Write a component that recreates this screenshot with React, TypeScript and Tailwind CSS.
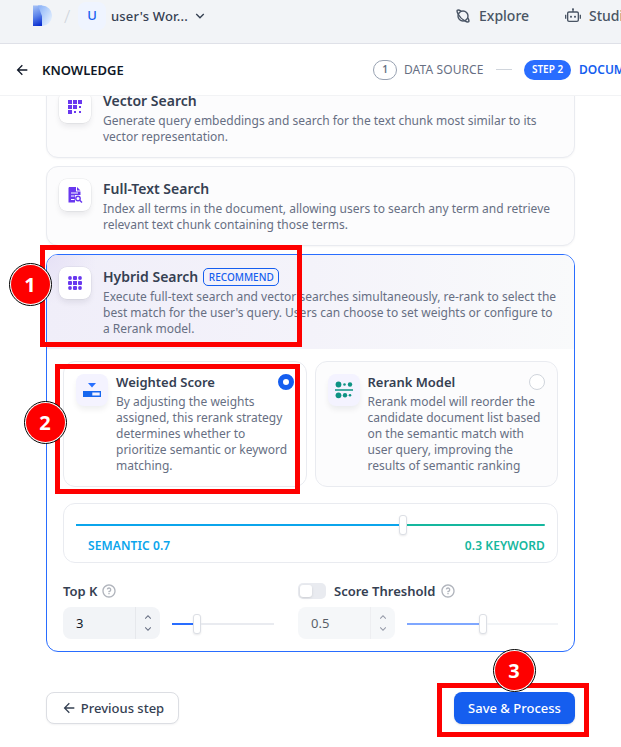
import React from 'react';
import {
  RiArrowDownSLine,
  RiArrowLeftLine,
  RiArrowUpSLine,
  RiQuestionLine,
  RiRobot2Line,
} from 'react-icons/ri';

function Logo() {
  return (
    <svg width="19" height="22" viewBox="0 0 19 22" className="shrink-0">
      <defs>
        <linearGradient id="lg-left" x1="0.4" y1="0" x2="0.6" y2="1">
          <stop offset="0" stopColor="#9fbcf5" />
          <stop offset="0.5" stopColor="#5a82ea" />
          <stop offset="1" stopColor="#0a2fd0" />
        </linearGradient>
        <linearGradient id="lg-right" x1="0" y1="0" x2="1" y2="0.9">
          <stop offset="0" stopColor="#86aef8" />
          <stop offset="0.5" stopColor="#b9d3fb" />
          <stop offset="1" stopColor="#eef6ff" />
        </linearGradient>
      </defs>
      <path d="M0 0.5H9V21H0Z" fill="url(#lg-left)" />
      <path d="M5 0.500H9A10 10.200 0 0 1 9 21V11Z" fill="url(#lg-right)" />
    </svg>
  );
}

function PlanetIcon() {
  return (
    <svg width="16" height="16" viewBox="0 0 16 16" fill="none" stroke="currentColor" strokeWidth="1.400" className="ml-[247px] shrink-0">
      <circle cx="8" cy="8" r="5" />
      <path d="M3.200 6.200C1.900 4 1.800 2.900 2.300 2.300C2.900 1.800 4.200 2 6.200 3.200" />
      <path d="M3.200 6.200C4.300 8.300 7.700 11.700 9.800 12.800C12 14.200 13.100 14.200 13.700 13.700C14.200 13.100 14 11.800 12.800 9.800" />
    </svg>
  );
}

function VectorIcon() {
  return (
    <svg width="14" height="14" viewBox="0 0 14 14" fill="#6938ef">
      <path d="M0 0h4v4H0zM5 0h4v4H5zM10 0h4v4h-4zM0 5h4v4H0zM5 5h4v4H5zM11 6h2v2h-2zM0 10h4v4H0zM6 11h2v2H6zM11 11h2v2h-2z" />
    </svg>
  );
}

function FullTextIcon() {
  return (
    <svg width="15" height="16" viewBox="0 0 15 16" fill="none">
      <path d="M1 0H8V4.500H12.500V8H1Z" fill="#6938ef" />
      <path d="M9 0L12.500 3.500H9Z" fill="#6938ef" />
      <path d="M0.500 0.500H2V15.500H0.500ZM1 8H7V15.500H1Z" fill="#6938ef" />
      <path d="M3 6H10M3 9H6.500M3 12.500H6.500" stroke="#fff" strokeWidth="1.200" />
      <circle cx="10" cy="11.500" r="2.200" stroke="#6938ef" strokeWidth="1.400" />
      <path d="M11.700 13.200L14 15.500" stroke="#6938ef" strokeWidth="1.500" />
    </svg>
  );
}

function HybridIcon() {
  return (
    <svg width="14" height="14" viewBox="0 0 14 14" fill="#6938ef">
      {[2, 7, 12].map((y) =>
        [2, 7, 12].map((x) =>
          x === 7 || y === 7 ? (
            <rect key={`${x}-${y}`} x={x - 2} y={y - 2} width="4" height="4" rx={x === 7 && y === 7 ? 0 : 1} />
          ) : (
            <circle key={`${x}-${y}`} cx={x} cy={y} r="1.900" />
          ),
        ),
      )}
    </svg>
  );
}

function WeightIcon() {
  return (
    <svg width="18" height="14" viewBox="0 0 18 14" fill="#1667ef">
      <path d="M5 0H13L9 4.500Z" fill="#2970ff" />
      <path fillRule="evenodd" d="M0 8H18V14H0ZM9.300 9.500V12.500H16.700V9.500Z" />
    </svg>
  );
}

function RerankIcon() {
  return (
    <svg width="18" height="18" viewBox="0 0 18 18" fill="#0e9384">
      <circle cx="3.500" cy="3.500" r="2.900" />
      <circle cx="9.500" cy="3.500" r="1.300" />
      <circle cx="15" cy="3.500" r="2.200" />
      <rect y="8" width="18" height="2" opacity="0.75" />
      <circle cx="3.500" cy="14.300" r="2.900" />
      <circle cx="10" cy="14.300" r="2.200" />
      <circle cx="15" cy="14.300" r="1.300" />
    </svg>
  );
}

function MethodHeader({ icon, title, badge, lines }: { icon: React.ReactNode; title: string; badge?: string; lines: string[] }) {
  return (
    <div className="flex gap-3 p-3">
      <div className="flex size-8 shrink-0 items-center justify-center rounded-lg bg-white shadow-[0_0_0_0.5px_#10182814,0_4px_6px_-1px_#10182818]">
        {icon}
      </div>
      <div>
        <div className="flex h-5 items-center gap-[5px] text-sm font-semibold text-[#354052]">
          {title}
          {badge && (
            <span className="flex h-[18px] w-[76px] items-center justify-center rounded-[5px] border border-[#155eef] text-[10px] font-medium text-[#155eef]">
              {badge}
            </span>
          )}
        </div>
        <Lines className="mt-0.5" lines={lines} />
      </div>
    </div>
  );
}

function Lines({ lines, className }: { lines: string[]; className: string }) {
  return (
    <div className={`text-xs leading-4 whitespace-nowrap text-[#676f83] ${className}`}>
      {lines.map((l) => (
        <div key={l}>{l}</div>
      ))}
    </div>
  );
}

function RerankOption({ icon, title, lines, selected }: { icon: React.ReactNode; title: string; lines: string[]; selected?: boolean }) {
  return (
    <div className={`flex h-[126px] min-w-0 flex-1 gap-2 rounded-xl border border-[#e9ebf0] p-3 ${selected ? 'bg-white' : 'bg-[#fcfcfd]'}`}>
      <div className="flex size-8 shrink-0 items-center justify-center rounded-lg bg-[#f4f3ff] shadow-[0_4px_6px_-1px_#10182814]">
        {icon}
      </div>
      <div className="min-w-0 flex-1">
        <div className="flex h-4 items-center justify-between">
          <span className="text-[13px] leading-4 font-semibold text-[#354052]">{title}</span>
          <span className={`size-4 rounded-full bg-white ${selected ? 'border-[5px] border-[#155eef]' : 'border border-[#d0d5dc]'}`} />
        </div>
        <Lines className="mt-1" lines={lines} />
      </div>
    </div>
  );
}

function Handle() {
  return <span className="h-5 w-2 shrink-0 rounded-[3px] border border-[#dcdfe5] bg-white shadow-[0_1px_2px_#10182818]" />;
}

function NumberField({ value }: { value: string }) {
  return (
    <div className="flex h-8 w-[97px] shrink-0 overflow-hidden rounded-lg bg-[#f2f4f7] text-[#101828]">
      <div className="flex flex-1 items-center pt-px pl-[13px] text-[13px]">{value}</div>
      <div className="flex w-[25px] flex-col items-center justify-center border-l border-[#e6e8ec] text-[#676f83]">
        <RiArrowUpSLine className="h-3 w-3.5" />
        <RiArrowDownSLine className="h-3 w-3.5" />
      </div>
    </div>
  );
}

function Marker({ n, className }: { n: number; className: string }) {
  return (
    <div className={`absolute flex size-[43px] items-center justify-center rounded-full border border-black bg-white ${className}`}>
      <div className="flex size-[39px] items-center justify-center rounded-full bg-[#fe0000] pt-px text-[20px] font-bold text-white">{n}</div>
    </div>
  );
}

export default function App() {
  return (
    <div className="relative flex h-[747px] w-[621px] flex-col overflow-hidden bg-white font-['Noto_Sans',sans-serif]">
      <header className="flex h-11 shrink-0 items-center border-b border-[#dfe1e8] bg-[#f2f4f7] pb-3 pl-[33px] text-sm font-medium whitespace-nowrap text-[#495464]">
        <Logo />
        <span className="ml-3 w-[7px] shrink-0 text-lg font-light text-[#d0d5dc]">/</span>
        <span className="ml-[7px] flex size-7 shrink-0 items-center justify-center rounded-lg bg-[#eff4ff] text-[13px] text-[#155eef]">U</span>
        <span className="ml-[5px] w-[77px] shrink-0 pt-px text-[13px] tracking-[0.2px] text-[#354052]">user's Wor...</span>
        <RiArrowDownSLine className="ml-[4px] size-4 shrink-0 text-[#354052]" />
        <PlanetIcon />
        <span className="ml-2 w-[86px] shrink-0">Explore</span>
        <RiRobot2Line className="size-4 shrink-0" />
        <span className="ml-2 shrink-0">Studio</span>
      </header>

      <nav className="flex h-[52px] shrink-0 items-center border-b border-[#f2f3f5] pl-[14px] text-xs whitespace-nowrap">
        <RiArrowLeftLine className="size-4 shrink-0 text-[#101828]" />
        <span className="ml-3 w-[331px] shrink-0 pt-0.5 text-[13px] font-semibold text-[#101828]">KNOWLEDGE</span>
        <span className="flex h-5 w-6 shrink-0 items-center justify-center rounded-full border border-[#98a2b2] pt-px text-[10px] font-semibold text-[#676f83]">1</span>
        <span className="ml-[7px] w-[84px] shrink-0 tracking-[0.1px] text-[#676f83]">DATA SOURCE</span>
        <span className="ml-[8px] h-px w-4 shrink-0 bg-[#d0d5dc]" />
        <span className="ml-3 flex h-5 w-[47px] shrink-0 items-center justify-center rounded-full bg-[#296dff] pt-px text-[10px] font-semibold text-white">STEP 2</span>
        <span className="ml-2 shrink-0 font-semibold text-[#155eef]">DOCUMENT PROCESSING</span>
      </nav>

      <main className="min-h-0 flex-1 overflow-hidden px-[46px]">
        <div className="-mt-[18px] flex w-[529px] flex-col gap-2">
          <section className="rounded-xl border border-[#e9ebf0] bg-[#fcfcfd] shadow-[0_1px_2px_#1018280a]">
            <MethodHeader
              icon={<VectorIcon />}
              title="Vector Search"
              lines={['Generate query embeddings and search for the text chunk most similar to its', 'vector representation.']}
            />
          </section>
          <section className="rounded-xl border border-[#e9ebf0] bg-[#fcfcfd] shadow-[0_1px_2px_#1018280a]">
            <MethodHeader
              icon={<FullTextIcon />}
              title="Full-Text Search"
              lines={['Index all terms in the document, allowing users to search any term and retrieve', 'relevant text chunk containing those terms.']}
            />
          </section>
          <section className="overflow-hidden rounded-xl border border-[#296dff] bg-white">
            <div className="bg-[radial-gradient(circle_at_0_0,#e6e1f6_0,#e6e1f600_50px),linear-gradient(90deg,#f0eef9,#f4f3fa_50%,#f9fafb)]">
              <MethodHeader
                icon={<HybridIcon />}
                title="Hybrid Search"
                badge="RECOMMEND"
                lines={[
                  'Execute full-text search and vector searches simultaneously, re-rank to select the',
                  "best match for the user's query. Users can choose to set weights or configure to",
                  'a Rerank model.',
                ]}
              />
            </div>
            <div className="px-4 py-3">
              <div className="flex gap-2">
                <RerankOption
                  selected
                  icon={<WeightIcon />}
                  title="Weighted Score"
                  lines={['By adjusting the weights', 'assigned, this rerank strategy', 'determines whether to', 'prioritize semantic or keyword', 'matching.']}
                />
                <RerankOption
                  icon={<RerankIcon />}
                  title="Rerank Model"
                  lines={['Rerank model will reorder the', 'candidate document list based', 'on the semantic match with', 'user query, improving the', 'results of semantic ranking']}
                />
              </div>

              <div className="mt-4 h-[60px] rounded-xl border border-[#e9ebf0] px-3 pt-[11px]">
                <div className="flex items-center">
                  <span className="h-0.5 w-[323px] bg-[#0ba5ec]" />
                  <Handle />
                  <span className="h-0.5 flex-1 rounded-r bg-[#15b79e]" />
                </div>
                <div className="mt-[3px] flex justify-between pl-3 text-xs font-semibold tracking-[0.1px]">
                  <span className="text-[#0ba5ec]">SEMANTIC 0.7</span>
                  <span className="text-[#15b79e]">0.3 KEYWORD</span>
                </div>
              </div>

              <div className="mt-[18px] flex gap-6">
                <div className="w-[211px]">
                  <div className="flex h-5 items-center gap-1 text-[13px] font-semibold text-[#354052]">
                    <span className="pt-px">Top K</span>
                    <RiQuestionLine className="size-4 text-[#b0b4bc]" />
                  </div>
                  <div className="mt-1.5 flex items-center">
                    <NumberField value="3" />
                    <span className="mt-0.5 ml-3 h-0.5 w-[21px] bg-[#296dff]" />
                    <span className="mt-0.5 flex flex-1 items-center">
                      <Handle />
                      <span className="h-0.5 flex-1 bg-[#e9ebf0]" />
                    </span>
                  </div>
                </div>
                <div className="w-[260px]">
                  <div className="flex h-5 items-center text-[13px] font-semibold text-[#354052]">
                    <span className="mr-2 flex h-4 w-7 rounded-[5px] bg-[#e9ebf0] p-0.5">
                      <span className="h-3 w-3 rounded-[3px] bg-white shadow-sm" />
                    </span>
                    <span className="pt-px">Score Threshold</span>
                    <RiQuestionLine className="ml-[5px] size-4 text-[#b0b4bc]" />
                  </div>
                  <div className="mt-1.5 flex items-center">
                    <div className="opacity-70">
                      <NumberField value="0.5" />
                    </div>
                    <span className="mt-0.5 ml-3 h-0.5 w-[72px] bg-[#7fa7ff]" />
                    <span className="mt-0.5 flex flex-1 items-center">
                      <Handle />
                      <span className="h-0.5 flex-1 bg-[#f2f4f7]" />
                    </span>
                  </div>
                </div>
              </div>
            </div>
          </section>
        </div>

        <div className="mt-10 flex w-[529px] justify-between text-[13px] font-medium">
          <button className="flex h-8 w-[133px] items-center justify-center gap-1 rounded-lg border border-[#dcdee3] bg-white text-[#354052] shadow-[0_1px_2px_#1018280d]">
            <RiArrowLeftLine className="size-4" />
            <span className="pt-px">Previous step</span>
          </button>
          <button className="h-8 w-[121px] rounded-lg bg-[#155eef] pt-px text-white shadow-[0_1px_2px_#10182820]">Save &amp; Process</button>
        </div>
      </main>

      <div className="absolute top-[245px] left-[40px] h-[102px] w-[262px] border-[5px] border-[#fe0000]" />
      <div className="absolute top-[364px] left-[55px] h-[130px] w-[245px] border-[5px] border-[#fe0000]" />
      <div className="absolute top-[683px] left-[437px] h-[54px] w-[152px] border-[5px] border-[#fe0000]" />
      <Marker n={1} className="top-[262.500px] left-[8.500px]" />
      <Marker n={2} className="top-[400.500px] left-[23.500px]" />
      <Marker n={3} className="top-[648.500px] left-[492.500px]" />
    </div>
  );
}
